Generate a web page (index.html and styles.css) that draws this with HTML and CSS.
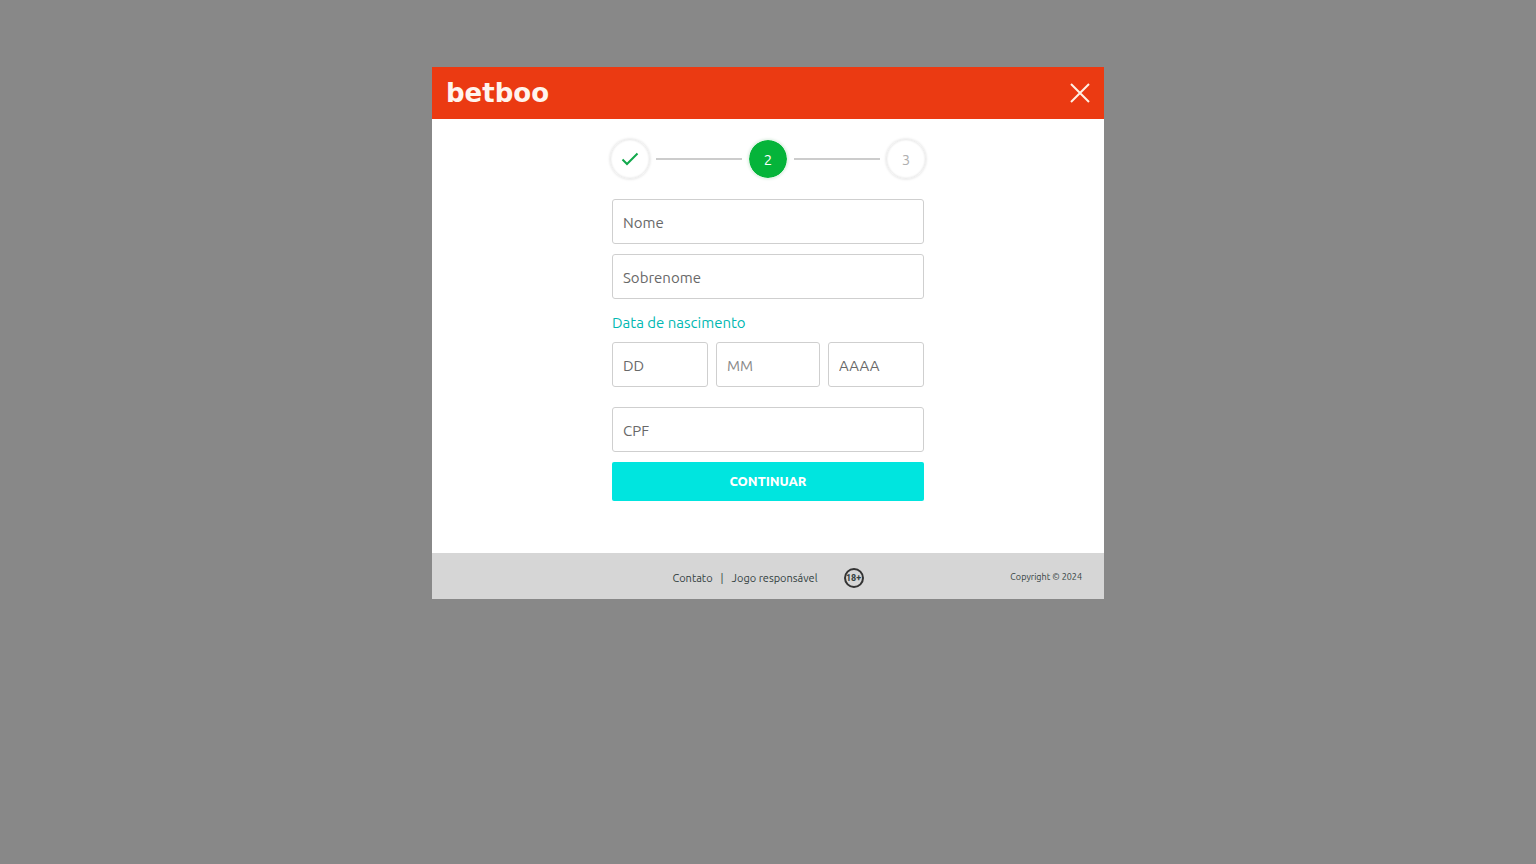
FILE: index.html
```html
<!DOCTYPE html>
<html lang="pt-BR">
<head>
  <meta charset="utf-8">
  <meta name="viewport" content="width=device-width, initial-scale=1">
  <title>betboo</title>
  <link rel="stylesheet" href="styles.css">
</head>
<body>
  <main class="modal" role="dialog" aria-label="betboo">
    <header class="modal-header">
      <span class="logo">betboo</span>
      <button class="close" type="button" aria-label="Fechar">
        <svg viewBox="0 0 20 20" width="20" height="20" aria-hidden="true"><path d="M1 1 19 19M19 1 1 19"/></svg>
      </button>
    </header>
    <div class="modal-body">
      <ol class="steps">
        <li class="step step-done">
          <svg viewBox="0 0 18 14" width="18" height="14" aria-label="1"><path d="M1.500 7.500 6 12 16.500 1.500"/></svg>
        </li>
        <li class="line" aria-hidden="true"></li>
        <li class="step step-current" aria-current="step">2</li>
        <li class="line" aria-hidden="true"></li>
        <li class="step">3</li>
      </ol>
      <form class="form">
        <input class="field" type="text" placeholder="Nome" aria-label="Nome">
        <input class="field" type="text" placeholder="Sobrenome" aria-label="Sobrenome">
        <fieldset class="birth">
          <legend class="birth-label">Data de nascimento</legend>
          <div class="birth-row">
            <input class="field" type="text" placeholder="DD" aria-label="Dia">
            <input class="field field-month" type="text" placeholder="MM" aria-label="Mês">
            <input class="field" type="text" placeholder="AAAA" aria-label="Ano">
          </div>
        </fieldset>
        <input class="field" type="text" placeholder="CPF" aria-label="CPF">
        <button class="submit" type="submit">CONTINUAR</button>
      </form>
    </div>
    <footer class="modal-footer">
      <nav class="links">
        <a href="#contato">Contato</a>
        <span>|</span>
        <a href="#jogo">Jogo responsável</a>
        <span class="age">18+</span>
      </nav>
      <small class="copyright">Copyright © 2024</small>
    </footer>
  </main>
</body>
</html>
```
FILE: styles.css
```css
* { box-sizing: border-box; }

body {
  margin: 0;
  min-height: 100vh;
  padding: 67px 16px;
  background: #888888;
  font-family: Ubuntu, "Noto Sans", sans-serif;
  font-size: 15px;
}

.modal {
  max-width: 672px;
  margin: 0 auto;
  background: #ffffff;
}

.modal-header {
  display: flex;
  align-items: center;
  justify-content: space-between;
  height: 52px;
  padding: 0 14px;
  background: #eb3a12;
}

.logo {
  color: #fff4ee;
  font: bold 26px/26px "DejaVu Sans", sans-serif;
}

.close {
  display: flex;
  padding: 0;
  border: 0;
  background: none;
  cursor: pointer;
}

.close path {
  fill: none;
  stroke: #fff0e4;
  stroke-width: 2;
}

.modal-body { padding: 20px 16px 52px; }

.steps {
  display: flex;
  align-items: center;
  max-width: 316px;
  margin: 0 auto 20px;
  padding: 0;
  list-style: none;
}

.step {
  display: flex;
  align-items: center;
  justify-content: center;
  width: 40px;
  height: 40px;
  border: 1px solid #eeeeee;
  border-radius: 50%;
  box-shadow: 0 0 3px #d8d8d8, inset 0 0 2px #e4e4e4;
  color: #b0b0b0;
}

.step-done path {
  fill: none;
  stroke: #12a84c;
  stroke-width: 2;
}

.step-current {
  background: #05b43a;
  border-color: #e8f8ec;
  box-shadow: 0 0 3px #d8e8dc;
  background-clip: padding-box;
  color: #ffffff;
}

.line {
  flex: 1;
  height: 2px;
  margin: 0 6px;
  background: #cccccc;
}

.form {
  display: flex;
  flex-direction: column;
  gap: 10px;
  max-width: 312px;
  margin: 0 auto;
}

.field {
  width: 100%;
  min-width: 0;
  height: 45px;
  padding: 1px 10px 0;
  border: 1px solid #cfcfcf;
  border-radius: 3px;
  background: #ffffff;
  color: #555555;
  font: inherit;
}

.field::placeholder {
  color: #686868;
  opacity: 1;
}

.field-month::placeholder { color: #888888; }

.birth {
  min-width: 0;
  margin: 0 0 10px;
  padding: 0;
  border: 0;
}

.birth-label {
  padding: 3px 0 9px;
  color: #00b8b2;
  line-height: 21px;
}

.birth-row {
  display: grid;
  grid-template-columns: 12fr 13fr 12fr;
  gap: 8px;
}

.submit {
  height: 39px;
  padding: 0 0 1px;
  border: 0;
  border-radius: 2px;
  background: #00e5df;
  color: #ffffff;
  font: 800 13px/16px Ubuntu, "Noto Sans", sans-serif;
  cursor: pointer;
}

.modal-footer {
  display: grid;
  grid-template-columns: 1fr auto 1fr;
  align-items: center;
  height: 46px;
  padding: 4px 22px 0;
  background: #d6d6d6;
  color: #333f3f;
}

.links {
  display: flex;
  grid-column: 2;
  align-items: center;
  gap: 8px;
  font-size: 11px;
}

.links a {
  color: inherit;
  text-decoration: none;
}

.age {
  display: flex;
  align-items: center;
  justify-content: center;
  width: 20px;
  height: 20px;
  margin-left: 18px;
  border: 2px solid #333333;
  border-radius: 50%;
  font: bold 9px/10px Roboto, "Liberation Sans", sans-serif;
}

.copyright {
  justify-self: end;
  padding-bottom: 3px;
  font-size: 9px;
}
```
